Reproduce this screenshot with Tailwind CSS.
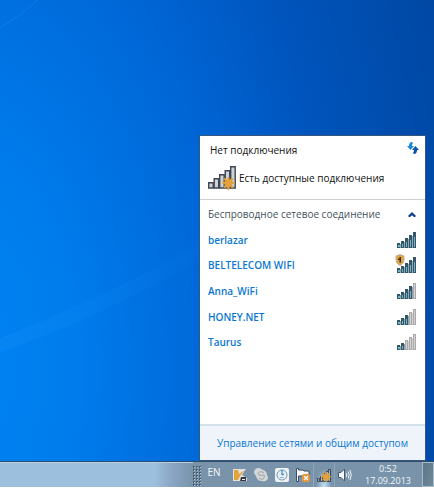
<!DOCTYPE html>
<html lang="ru">
  <head>
    <meta charset="UTF-8" />
    <meta name="viewport" content="width=device-width, initial-scale=1.0" />
    <title>Сетевые подключения</title>
    <script src="https://cdn.jsdelivr.net/npm/@tailwindcss/browser@4"></script>
  </head>
  <body class="bg-white font-['Open_Sans','Noto_Sans',sans-serif] text-[10px] leading-4">
    <!-- shared shapes -->
    <svg class="hidden">
      <symbol id="star" viewBox="0 0 14 14">
        <path fill="#e3a03c" d="M6.2 0h1.6l.6 3 2.6-2.1 1.3 1.2-1.9 2.7 3.4.7v1.8l-3.3.8 2 2.6-1.5 1.4-2.6-1.9L7.8 14H6.2l-.7-3.7L3 12.2l-1.4-1.4 2-2.6L0 7.4V5.7l3.5-.8L1.7 2.2 3 .9 5.6 3z" />
      </symbol>
      <symbol id="bar1" viewBox="0 0 19 16">
        <rect x="0" y="11" width="3" height="5" fill="#34566a" /><rect x="1" y="13" width="2" height="2" fill="#6fb4c4" /><rect x="3" y="12" width="1" height="4" fill="#92a9b4" />
      </symbol>
      <symbol id="bar2" viewBox="0 0 19 16">
        <rect x="4" y="9" width="3" height="7" fill="#34566a" /><rect x="5" y="12" width="1" height="3" fill="#6fb4c4" /><rect x="7" y="10" width="1" height="6" fill="#92a9b4" />
      </symbol>
      <symbol id="bar3" viewBox="0 0 19 16">
        <rect x="8" y="6" width="3" height="10" fill="#34566a" /><rect x="9" y="10" width="1" height="5" fill="#6fb4c4" /><rect x="11" y="7" width="1" height="9" fill="#92a9b4" />
      </symbol>
      <symbol id="bar4" viewBox="0 0 19 16">
        <rect x="12" y="3" width="3" height="13" fill="#34566a" /><rect x="13" y="8" width="1" height="7" fill="#6fb4c4" /><rect x="15" y="4" width="1" height="12" fill="#92a9b4" />
      </symbol>
      <symbol id="bar5" viewBox="0 0 19 16">
        <rect x="16" y="0" width="3" height="16" fill="#34566a" /><rect x="17" y="5" width="1" height="10" fill="#6fb4c4" />
      </symbol>
      <symbol id="empty" viewBox="0 0 19 16">
        <path fill="#a9a9a9" d="M8 6h3v10H8zM12 3h3v13h-3zM16 0h3v16h-3z" />
        <path fill="#d2d2d2" d="M9 7h1v8H9zM13 4h1v11h-1zM17 1h1v14h-1zM11 7h1v9h-1zM15 4h1v12h-1z" />
      </symbol>
    </svg>

    <div class="flex min-h-screen flex-col pb-1.5">
      <!-- desktop -->
      <main class="relative flex flex-1 items-end justify-end overflow-hidden bg-[radial-gradient(118%_210%_at_-8%_80%,#0084f4_0%,#007cec_22%,#0066d6_50%,#0054bc_72%,#0047a2_100%)] pr-2">
        <svg class="absolute inset-0 h-full w-full" viewBox="0 0 434 461" preserveAspectRatio="none" aria-hidden="true">
          <defs>
            <linearGradient id="ray">
              <stop offset="0" stop-color="#2a9cff" stop-opacity=".14" />
              <stop offset="1" stop-color="#2a9cff" stop-opacity=".03" />
            </linearGradient>
          </defs>
          <path d="M0 338Q100 300 199 244V260Q100 318 0 352z" fill="url(#ray)" />
          <path d="M0 28Q20 16 38 0" fill="none" stroke="#2a9cff" stroke-opacity=".3" />
        </svg>

        <!-- network flyout -->
        <section class="relative flex h-[326px] w-[227px] flex-col border border-[#35577e] bg-white">
          <header class="h-16 border-b border-[#cfcfcf] pl-2">
            <div class="flex items-start justify-between pt-1.5 pr-1.5">
              <h1 class="pl-0.5 font-medium text-[#111]">Нет подключения</h1>
              <button class="h-3 w-3" aria-label="Обновить">
                <svg class="h-3 w-3" viewBox="0 0 12 12">
                  <path d="M5 0Q2 0 2 4H0l3.500 4L7 4H5Q5 2 6 1z" fill="#1f86da" />
                  <path d="M7 12q3 0 3-4h2L8.500 4 5 8h2q0 2-1 3z" fill="#0b55ae" />
                </svg>
              </button>
            </div>
            <div class="mt-2 flex items-center gap-[3px]">
              <svg class="h-6 w-7 shrink-0" viewBox="0 0 28 24">
                <g fill="#cfd2d6" stroke="#3d4652" stroke-width="1.400">
                  <path d="M.7 16.700h4.500V22H.7z" /><path d="M6.200 12.700h4.500V22H6.200z" /><path d="M11.700 8.700h4.500V22h-4.500z" /><path d="M17.200 4.700h4.500V22h-4.500z" /><path d="M22.700.7h4.500V22h-4.500z" />
                </g>
                <use href="#star" x="14" y="11" width="13" height="13" />
              </svg>
              <p class="font-medium text-[#111]">Есть доступные подключения</p>
            </div>
          </header>

          <div class="flex-1 pt-1.5 pr-[9px] pl-2">
            <button class="flex w-full items-center justify-between text-[#44535d]">
              Беспроводное сетевое соединение
              <svg class="h-[5px] w-2" viewBox="0 0 8 5" aria-hidden="true"><path d="M4 0l4 4-1 1H6L4 3.200 2 5H1L0 4z" fill="#0b3f94" /></svg>
            </button>
            <ul class="mt-[5px] grid h-32 grid-rows-5 font-semibold text-[#0a78d0]">
              <li>
                <a href="#" class="flex h-full items-center justify-between">berlazar
                  <svg class="h-4 w-[19px]" viewBox="0 0 19 16"><use href="#bar1" /><use href="#bar2" /><use href="#bar3" /><use href="#bar4" /><use href="#bar5" /></svg>
                </a>
              </li>
              <li>
                <a href="#" class="flex h-full items-center justify-between">BELTELECOM WIFI
                  <svg class="h-4 w-[19px] overflow-visible" viewBox="0 0 19 16">
                    <use href="#bar1" /><use href="#bar2" /><use href="#bar3" /><use href="#bar4" /><use href="#bar5" />
                    <path d="M3-2.500L7-1v4q0 3.500-4 5.500-4-2-4-5.500v-4z" fill="#e3a43c" stroke="#b9b2a4" />
                    <path d="M2.500 0h1.500v5.500H2.500zM1 1.500h1.500V3H1z" fill="#3a2c18" />
                  </svg>
                </a>
              </li>
              <li>
                <a href="#" class="flex h-full items-center justify-between">Anna_WiFi
                  <svg class="h-4 w-[19px]" viewBox="0 0 19 16"><use href="#empty" /><use href="#bar1" /><use href="#bar2" /><use href="#bar3" /><use href="#bar4" /></svg>
                </a>
              </li>
              <li>
                <a href="#" class="flex h-full items-center justify-between">HONEY.NET
                  <svg class="h-4 w-[19px]" viewBox="0 0 19 16"><use href="#empty" /><use href="#bar1" /><use href="#bar2" /><use href="#bar3" /></svg>
                </a>
              </li>
              <li>
                <a href="#" class="flex h-full items-center justify-between">Taurus
                  <svg class="h-4 w-[19px]" viewBox="0 0 19 16"><use href="#empty" /><use href="#bar1" /><use href="#bar2" /></svg>
                </a>
              </li>
            </ul>
          </div>

          <footer class="flex h-9 items-center justify-center border-t-2 border-[#d3e2ea] bg-[#eff4fb]">
            <a href="#" class="font-medium text-[#0a78d0]">Управление сетями и общим доступом</a>
          </footer>
        </section>
      </main>

      <!-- taskbar -->
      <footer class="flex h-[26px] items-stretch border-t border-[#2f4d6a] bg-[#7893aa] text-[#f4f8fb]">
        <div class="flex-1 border-t border-[#b9cfe2] bg-linear-to-r from-[#9dbfde] from-80% via-[#8da8c6] via-88% to-[#7893aa]"></div>
        <svg class="mt-1 h-5 w-2" viewBox="0 0 8 20" aria-hidden="true">
          <defs>
            <pattern id="grip" width="3" height="3" patternUnits="userSpaceOnUse">
              <rect width="2" height="2" fill="#45596c" /><rect x="1" y="1" width="1" height="1" fill="#bccbd8" />
            </pattern>
          </defs>
          <rect width="8" height="20" fill="url(#grip)" />
        </svg>
        <button class="ml-1.5 h-5 w-3.5">EN</button>
        <div class="ml-3 flex items-center gap-[7px]">
          <button aria-label="Kaspersky">
            <svg class="h-3.5 w-3.5" viewBox="0 0 14 14">
              <path d="M0 1h13L9 7l5 3v3H0z" fill="#e2e3dc" />
              <path d="M1 2h4l1 4 6-4-5 6-2 4H1z" fill="#e5a13a" />
              <path d="M8 9h5v4H7z" fill="#35393d" /><path d="M9 11h3v1H9z" fill="#eee" />
            </svg>
          </button>
          <button aria-label="Skype">
            <svg class="h-3.5 w-3.5" viewBox="0 0 14 14">
              <path d="M4 0q3 0 5 2 4 1 4 5 2 3 0 5-2 2-5 1-5 0-6-5Q0 6 0 4q1-4 4-4z" fill="#d4d6d6" />
              <path d="M10 5Q8 3 5.500 4t-.500 3q2 1 4 0t1 2.500-5 .5" fill="none" stroke="#9aa5ac" />
            </svg>
          </button>
          <button aria-label="Мониторинг">
            <svg class="h-3.5 w-3.5" viewBox="0 0 14 14">
              <rect width="14" height="14" rx="2" fill="#edf2f5" />
              <circle cx="7" cy="7" r="5" fill="#e6eff5" stroke="#7d97ad" />
              <path d="M7 2v5l2-1" fill="none" stroke="#1e74b8" /><path d="M5 9h4v1H5z" fill="#a0b3c2" />
            </svg>
          </button>
          <button aria-label="Центр поддержки">
            <svg class="h-3.5 w-3.5" viewBox="0 0 14 14">
              <path d="M.5.5h2V2h4.500l1 1h5v6H8L7 8H2.500v5.500h-2z" fill="#f7f9fa" stroke="#3a4d5e" />
              <rect x="6" y="6" width="8" height="8" rx="2" fill="#e3953a" /><path d="M8 8l4 4m0-4l-4 4" stroke="#fff" stroke-width="1.300" />
            </svg>
          </button>
          <button class="-mx-1 h-6 border-x border-[#9db3c6]/60 bg-[radial-gradient(ellipse_at_bottom,#c4e2f8_0%,transparent_55%)] px-[3px]" aria-label="Сеть">
            <svg class="h-3.5 w-3.5" viewBox="0 0 14 14">
              <path d="M.5 10.500h2v3h-2zM3.500 8.500h2v5h-2zM6.500 5.500h2v8h-2zM9.500 3.500h2v10h-2zM11.500 1.500h2v12h-2z" fill="#a9b8c4" stroke="#3a4856" />
              <use href="#star" x="4" y="4" width="10" height="10" />
            </svg>
          </button>
          <button aria-label="Громкость">
            <svg class="h-3.5 w-3.5" viewBox="0 0 14 14">
              <path d="M.5 4.500H3l3.500-3.500v12L3 9.500H.5z" fill="#f7f9fa" stroke="#46596b" />
              <path d="M8.300 5q1 2 0 4M10.200 3.500q2 3.500 0 7M12 2q2.500 5 0 10" fill="none" stroke="#eef4f8" />
            </svg>
          </button>
        </div>
        <time class="ml-3 flex w-12 flex-col items-center justify-center text-[9px] leading-3" datetime="2013-09-17T00:52">
          <span>0:52</span>
          <span>17.09.2013</span>
        </time>
        <button class="ml-2.5 w-3 border border-[#a9bccb] bg-linear-to-br from-[#5b7687] to-[#70899b]" aria-label="Свернуть все окна"></button>
      </footer>
    </div>
  </body>
</html>
